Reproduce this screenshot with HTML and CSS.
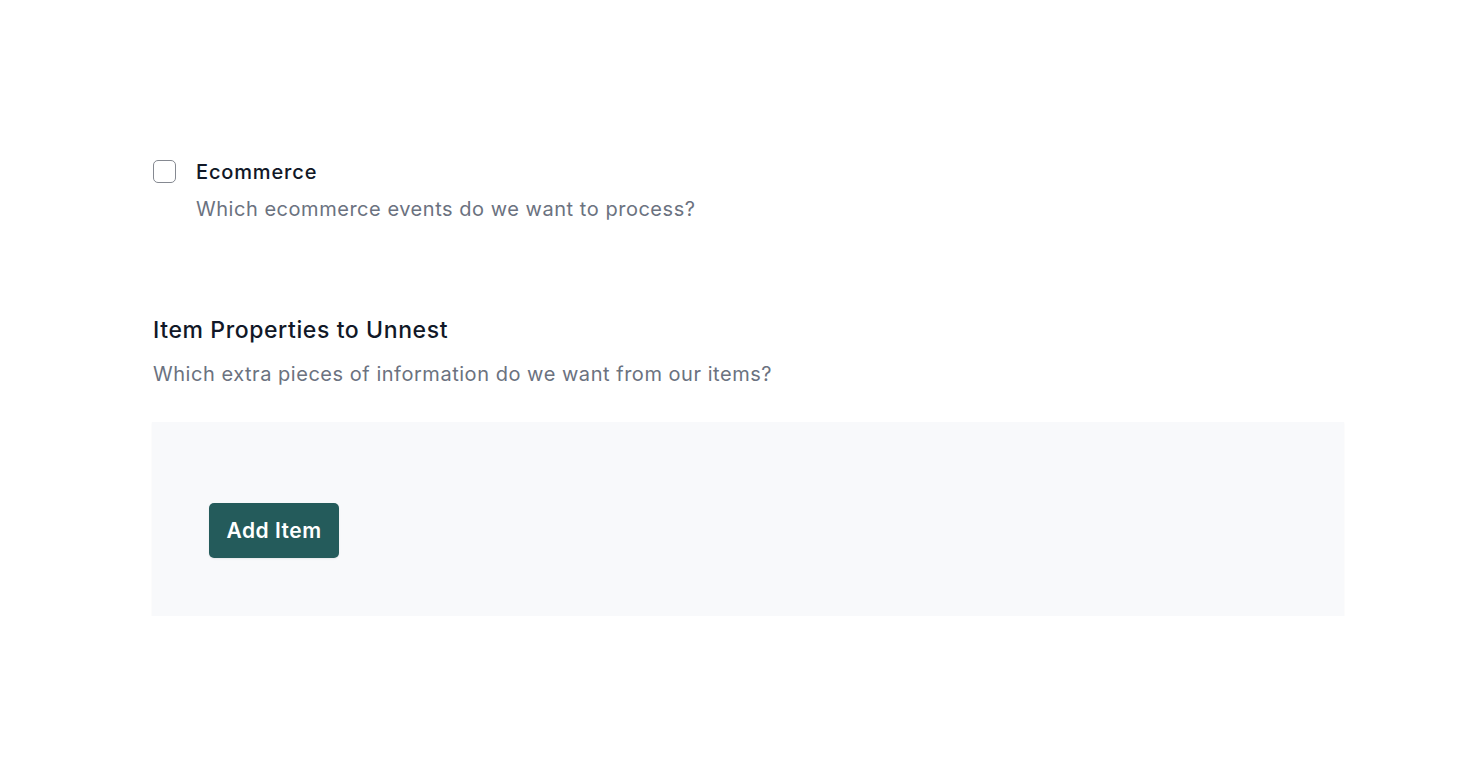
FILE: index.html
```html
<!DOCTYPE html>
<html>
<head>
<meta charset="utf-8">
<link rel="stylesheet" href="styles.css">
</head>
<body>
<main class="page">
  <div class="check-row">
    <span class="checkbox"></span>
    <div class="check-text">
      <div class="check-label">Ecommerce</div>
      <div class="check-desc">Which ecommerce events do we want to process?</div>
    </div>
  </div>
  <section class="section">
    <h2 class="section-title">Item Properties to Unnest</h2>
    <p class="section-desc">Which extra pieces of information do we want from our items?</p>
    <div class="panel">
      <button class="btn">Add Item</button>
    </div>
  </section>
</main>
</body>
</html>
```
FILE: styles.css
```css
html, body {
  margin: 0;
  padding: 0;
  background: #ffffff;
}
body {
  font-family: Inter, "Noto Sans", sans-serif;
}
.page {
  width: 1192px;
  margin-left: 152px;
  padding-top: 160px;
}
.check-row {
  display: flex;
  align-items: flex-start;
  gap: 20px;
}
.checkbox {
  width: 23px;
  height: 23px;
  margin-left: 1px;
  margin-top: 0;
  border: 1.5px solid #858991;
  border-radius: 5px;
  box-sizing: border-box;
  background: #fff;
  flex: none;
}
.check-label {
  font-size: 20px;
  font-weight: 500;
  color: #111827;
  line-height: 25px;
  letter-spacing: 0.85px;
}
.check-desc {
  margin-top: 12px;
  font-size: 20px;
  color: #6b7280;
  line-height: 25px;
  letter-spacing: 0.53px;
}
.section {
  margin-top: 94px;
}
.section-title {
  margin: 0 0 0 1px;
  font-size: 23px;
  font-weight: 500;
  color: #111827;
  line-height: 28px;
  letter-spacing: 0.6px;
}
.section-desc {
  margin: 18px 0 0 1px;
  font-size: 20px;
  color: #6b7280;
  line-height: 25px;
  letter-spacing: 0.53px;
}
.panel {
  margin-top: 35px;
  background: #f8f9fb;
  box-shadow: 0 1px 2px rgba(0,0,0,0.04);
  padding: 81px 57px 58px;
}
.btn {
  display: block;
  height: 55px;
  width: 130px;
  border: none;
  border-radius: 5px;
  background: #245b5b;
  color: #fff;
  font-family: Inter, "Noto Sans", sans-serif;
  font-size: 21px;
  font-weight: 600;
  letter-spacing: 0.5px;
  box-shadow: 0 1px 2px rgba(0,0,0,0.08);
  padding: 0;
}
```
